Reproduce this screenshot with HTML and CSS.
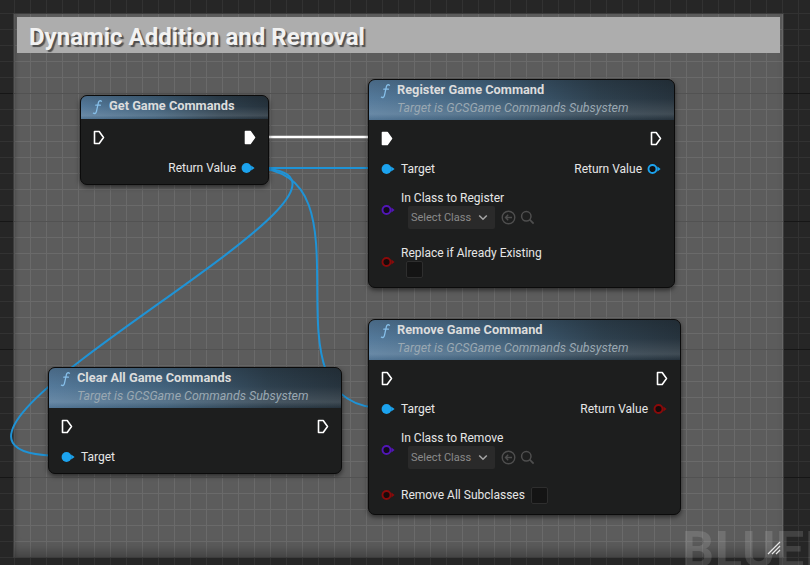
FILE: index.html
```html
<!DOCTYPE html>
<html>
<head>
<meta charset="utf-8">
<link rel="stylesheet" href="styles.css">
</head>
<body>
<div class="canvas">
  <div class="comment">
    <div class="comment-title">Dynamic Addition and Removal</div>
    <svg class="resize" width="14" height="14" viewBox="0 0 14 14"><path d="M13 1L1 13M13 5L5 13M13 9L9 13" stroke="#e6e6e6" stroke-width="1.3"/></svg>
  </div>

  <svg class="wires" width="810" height="565" viewBox="0 0 810 565">
    <path d="M256 137H382" stroke="#ffffff" stroke-width="2.6" fill="none"/>
    <path d="M252 168H384" stroke="#1f93d6" stroke-width="2" fill="none"/>
    <path d="M252 168C382 168 252 408 384 408" stroke="#1f93d6" stroke-width="2" fill="none"/>
    <path d="M252 168C452 168 -165 456 62 456" stroke="#1f93d6" stroke-width="2" fill="none"/>
  </svg>

  <!-- Get Game Commands -->
  <div class="node n-get">
    <div class="hdr single">
      <svg class="fn" width="11" height="16" viewBox="0 0 11 16"><path d="M9.5 2.2C8.2 1.3 6.8 1.8 6.4 3.6L4.4 12.6C4 14.4 2.8 14.9 1.4 14.2M3.8 6.2H8.4" stroke="#86bfe9" stroke-width="1.3" fill="none" stroke-linecap="round"/></svg>
      <span class="ttl">Get Game Commands</span>
    </div>
    <div class="nbody pb5">
      <div class="row split">
        <svg width="12" height="15" viewBox="0 0 12 15"><path d="M1.5 1.5H6.2L10.5 7.5L6.2 13.5H1.5Z" fill="none" stroke="#fff" stroke-width="1.6" stroke-linejoin="round"/></svg>
        <svg width="12" height="15" viewBox="0 0 12 15"><path d="M1.5 1.5H6.2L10.5 7.5L6.2 13.5H1.5Z" fill="#fff" stroke="#fff" stroke-width="1.6" stroke-linejoin="round"/></svg>
      </div>
      <div class="row end mt9">
        <span>Return Value</span>
        <svg width="15" height="12" viewBox="0 0 15 12"><circle cx="5.5" cy="6" r="4.9" fill="#1ca3ee"/><path d="M10.2 3.6L13.6 6L10.2 8.4Z" fill="#1ca3ee"/></svg>
      </div>
    </div>
  </div>

  <!-- Register Game Command -->
  <div class="node n-reg">
    <div class="hdr">
      <svg class="fn" width="11" height="16" viewBox="0 0 11 16"><path d="M9.5 2.2C8.2 1.3 6.8 1.8 6.4 3.6L4.4 12.6C4 14.4 2.8 14.9 1.4 14.2M3.8 6.2H8.4" stroke="#86bfe9" stroke-width="1.3" fill="none" stroke-linecap="round"/></svg>
      <span class="ttl">Register Game Command</span>
      <span class="sub">Target is GCSGame Commands Subsystem</span>
    </div>
    <div class="nbody pb9">
      <div class="row split">
        <svg width="12" height="15" viewBox="0 0 12 15"><path d="M1.5 1.5H6.2L10.5 7.5L6.2 13.5H1.5Z" fill="#fff" stroke="#fff" stroke-width="1.6" stroke-linejoin="round"/></svg>
        <svg width="12" height="15" viewBox="0 0 12 15"><path d="M1.5 1.5H6.2L10.5 7.5L6.2 13.5H1.5Z" fill="none" stroke="#fff" stroke-width="1.6" stroke-linejoin="round"/></svg>
      </div>
      <div class="row split mt9">
        <span class="pinlabel">
          <svg width="15" height="12" viewBox="0 0 15 12"><circle cx="5.5" cy="6" r="4.9" fill="#1ca3ee"/><path d="M10.2 3.6L13.6 6L10.2 8.4Z" fill="#1ca3ee"/></svg>
          <span>Target</span>
        </span>
        <span class="pinlabel">
          <span>Return Value</span>
          <svg width="15" height="12" viewBox="0 0 15 12"><circle cx="5.5" cy="6" r="4" fill="#0f1012" stroke="#1ca3ee" stroke-width="1.9"/><path d="M10.4 3.6L13.6 6L10.4 8.4Z" fill="#1ca3ee"/></svg>
        </span>
      </div>
      <div class="pinblock mt10">
        <svg width="15" height="12" viewBox="0 0 15 12"><circle cx="5.5" cy="6" r="4" fill="#120c1c" stroke="#5216b8" stroke-width="1.9"/><path d="M10.4 3.6L13.6 6L10.4 8.4Z" fill="#5216b8"/></svg>
        <div class="stack">
          <span class="lbl">In Class to Register</span>
          <div class="picker">
            <div class="select"><span>Select Class</span><svg width="10" height="7" viewBox="0 0 10 7"><path d="M1.2 1.5L5 5.2L8.8 1.5" stroke="#a3a3a3" stroke-width="1.6" fill="none"/></svg></div>
            <svg class="pick-ic" width="15" height="15" viewBox="0 0 15 15"><circle cx="7.5" cy="7.5" r="6.3" stroke="#4e4e4e" stroke-width="1.4" fill="none"/><path d="M11 7.5H4.5M7.2 4.8L4.5 7.5L7.2 10.2" stroke="#4e4e4e" stroke-width="1.4" fill="none"/></svg>
            <svg width="15" height="15" viewBox="0 0 15 15"><circle cx="6.3" cy="6.3" r="4.7" stroke="#4e4e4e" stroke-width="1.5" fill="none"/><path d="M9.7 9.7L13.6 13.6" stroke="#4e4e4e" stroke-width="1.7"/></svg>
          </div>
        </div>
      </div>
      <div class="pinblock mt16">
        <svg width="15" height="12" viewBox="0 0 15 12"><circle cx="5.5" cy="6" r="4" fill="#180a0a" stroke="#8a0a0a" stroke-width="1.9"/><path d="M10.4 3.6L13.6 6L10.4 8.4Z" fill="#8a0a0a"/></svg>
        <div class="stack">
          <span class="lbl">Replace if Already Existing</span>
          <span class="check ml5"></span>
        </div>
      </div>
    </div>
  </div>

  <!-- Remove Game Command -->
  <div class="node n-rem">
    <div class="hdr">
      <svg class="fn" width="11" height="16" viewBox="0 0 11 16"><path d="M9.5 2.2C8.2 1.3 6.8 1.8 6.4 3.6L4.4 12.6C4 14.4 2.8 14.9 1.4 14.2M3.8 6.2H8.4" stroke="#86bfe9" stroke-width="1.3" fill="none" stroke-linecap="round"/></svg>
      <span class="ttl">Remove Game Command</span>
      <span class="sub">Target is GCSGame Commands Subsystem</span>
    </div>
    <div class="nbody pb10">
      <div class="row split">
        <svg width="12" height="15" viewBox="0 0 12 15"><path d="M1.5 1.5H6.2L10.5 7.5L6.2 13.5H1.5Z" fill="none" stroke="#fff" stroke-width="1.6" stroke-linejoin="round"/></svg>
        <svg width="12" height="15" viewBox="0 0 12 15"><path d="M1.5 1.5H6.2L10.5 7.5L6.2 13.5H1.5Z" fill="none" stroke="#fff" stroke-width="1.6" stroke-linejoin="round"/></svg>
      </div>
      <div class="row split mt9">
        <span class="pinlabel">
          <svg width="15" height="12" viewBox="0 0 15 12"><circle cx="5.5" cy="6" r="4.9" fill="#1ca3ee"/><path d="M10.2 3.6L13.6 6L10.2 8.4Z" fill="#1ca3ee"/></svg>
          <span>Target</span>
        </span>
        <span class="pinlabel">
          <span>Return Value</span>
          <svg width="15" height="12" viewBox="0 0 15 12"><circle cx="5.5" cy="6" r="4" fill="#180a0a" stroke="#8a0a0a" stroke-width="1.9"/><path d="M10.4 3.6L13.6 6L10.4 8.4Z" fill="#8a0a0a"/></svg>
        </span>
      </div>
      <div class="pinblock mt10">
        <svg width="15" height="12" viewBox="0 0 15 12"><circle cx="5.5" cy="6" r="4" fill="#120c1c" stroke="#5216b8" stroke-width="1.9"/><path d="M10.4 3.6L13.6 6L10.4 8.4Z" fill="#5216b8"/></svg>
        <div class="stack">
          <span class="lbl">In Class to Remove</span>
          <div class="picker">
            <div class="select"><span>Select Class</span><svg width="10" height="7" viewBox="0 0 10 7"><path d="M1.2 1.5L5 5.2L8.8 1.5" stroke="#a3a3a3" stroke-width="1.6" fill="none"/></svg></div>
            <svg class="pick-ic" width="15" height="15" viewBox="0 0 15 15"><circle cx="7.5" cy="7.5" r="6.3" stroke="#4e4e4e" stroke-width="1.4" fill="none"/><path d="M11 7.5H4.5M7.2 4.8L4.5 7.5L7.2 10.2" stroke="#4e4e4e" stroke-width="1.4" fill="none"/></svg>
            <svg width="15" height="15" viewBox="0 0 15 15"><circle cx="6.3" cy="6.3" r="4.7" stroke="#4e4e4e" stroke-width="1.5" fill="none"/><path d="M9.7 9.7L13.6 13.6" stroke="#4e4e4e" stroke-width="1.7"/></svg>
          </div>
        </div>
      </div>
      <div class="row tight mt17">
        <span class="pinlabel">
          <svg width="15" height="12" viewBox="0 0 15 12"><circle cx="5.5" cy="6" r="4" fill="#180a0a" stroke="#8a0a0a" stroke-width="1.9"/><path d="M10.4 3.6L13.6 6L10.4 8.4Z" fill="#8a0a0a"/></svg>
          <span>Remove All Subclasses</span>
        </span>
        <span class="check"></span>
      </div>
    </div>
  </div>

  <!-- Clear All Game Commands -->
  <div class="node n-clr">
    <div class="hdr">
      <svg class="fn" width="11" height="16" viewBox="0 0 11 16"><path d="M9.5 2.2C8.2 1.3 6.8 1.8 6.4 3.6L4.4 12.6C4 14.4 2.8 14.9 1.4 14.2M3.8 6.2H8.4" stroke="#86bfe9" stroke-width="1.3" fill="none" stroke-linecap="round"/></svg>
      <span class="ttl">Clear All Game Commands</span>
      <span class="sub">Target is GCSGame Commands Subsystem</span>
    </div>
    <div class="nbody pb5">
      <div class="row split">
        <svg width="12" height="15" viewBox="0 0 12 15"><path d="M1.5 1.5H6.2L10.5 7.5L6.2 13.5H1.5Z" fill="none" stroke="#fff" stroke-width="1.6" stroke-linejoin="round"/></svg>
        <svg width="12" height="15" viewBox="0 0 12 15"><path d="M1.5 1.5H6.2L10.5 7.5L6.2 13.5H1.5Z" fill="none" stroke="#fff" stroke-width="1.6" stroke-linejoin="round"/></svg>
      </div>
      <div class="row mt9">
        <span class="pinlabel">
          <svg width="15" height="12" viewBox="0 0 15 12"><circle cx="5.5" cy="6" r="4.9" fill="#1ca3ee"/><path d="M10.2 3.6L13.6 6L10.2 8.4Z" fill="#1ca3ee"/></svg>
          <span>Target</span>
        </span>
      </div>
    </div>
  </div>

  <div class="watermark">BLUEPRINT</div>
</div>
</body>
</html>
```

FILE: styles.css
```css
* { box-sizing: border-box; }

body {
  margin: 0;
  background: #262626;
  font-family: Roboto, "Noto Sans", sans-serif;
}

.canvas {
  position: relative;
  width: 810px;
  height: 565px;
  overflow: hidden;
  background-color: #262626;
  background-image:
    linear-gradient(to bottom, #161616 1px, transparent 1px),
    linear-gradient(to bottom, #323232 1px, transparent 1px),
    linear-gradient(to right, #323232 1px, transparent 1px);
  background-size: 100% 128px, 16px 16px, 16px 16px;
  background-position: 0 93px, 0 13px, 14px 0;
}

/* comment box */
.comment {
  position: absolute;
  left: 14px;
  top: 14px;
  width: 769px;
  height: 543px;
  background-color: #5c5c5c;
  background-image:
    linear-gradient(to bottom, #525252 1px, transparent 1px),
    linear-gradient(to bottom, #6a6a6a 1px, transparent 1px),
    linear-gradient(to right, #6a6a6a 1px, transparent 1px);
  background-size: 100% 128px, 16px 16px, 16px 16px;
  background-position: 0 79px, 0 15px, 0 0;
  box-shadow: 0 0 0 1px #3c3c3c, inset 0 -12px 12px -6px rgba(0, 0, 0, 0.28), inset 3px 0 3px -1px rgba(0,0,0,0.15);
  padding: 3px 3px 0 3px;
}

.comment-title {
  height: 36px;
  background: #adadad;
  padding: 4px 0 0 12px;
  line-height: 32px;
  font-size: 24px;
  font-weight: 700;
  color: #f2f2f2;
  text-shadow: 2px 2px 1px rgba(0, 0, 0, 0.55);
  white-space: nowrap;
}

.resize {
  position: absolute;
  right: 2px;
  bottom: 2px;
}

.wires {
  position: absolute;
  left: 0;
  top: 0;
}

/* nodes */
.node {
  position: absolute;
  background: #1d1e1e;
  border: 1px solid #0b0b0b;
  border-radius: 7px;
  box-shadow: 0 2px 5px rgba(0, 0, 0, 0.55);
  overflow: hidden;
  color: #e6e6e6;
  font-size: 12px;
}

.n-get { left: 80px; top: 95px; width: 189px; }
.n-reg { left: 368px; top: 79px; width: 307px; }
.n-rem { left: 368px; top: 319px; width: 313px; }
.n-clr { left: 48px; top: 367px; width: 294px; }

.hdr {
  display: grid;
  grid-template-columns: 17px 1fr;
  padding: 2px 10px 4px 11px;
  background:
    linear-gradient(to bottom, rgba(0, 0, 0, 0.14) 0%, rgba(255, 255, 255, 0.0) 45%, rgba(255, 255, 255, 0.12) 85%, rgba(0, 0, 0, 0.04) 100%),
    linear-gradient(to right, #54799a 0%, #41617b 40%, #2e404e 75%, #26333d 100%);
}

.hdr.single { padding-bottom: 4px; }

.fn {
  align-self: center;
  margin-top: 1px;
}

.ttl {
  font-weight: 700;
  font-size: 12.8px;
  line-height: 16px;
  color: #dcdcdc;
  white-space: nowrap;
}

.sub {
  grid-column: 2;
  font-style: italic;
  font-size: 12.4px;
  line-height: 17px;
  color: #9aa8b2;
  white-space: nowrap;
}

.nbody {
  display: flex;
  flex-direction: column;
  padding: 7px 12px 6px 12px;
}

.pb5 { padding-bottom: 5px; }
.pb9 { padding-bottom: 9px; }
.pb10 { padding-bottom: 10px; }

.row {
  display: flex;
  align-items: center;
  height: 22px;
  gap: 5px;
}

.row.split { justify-content: space-between; }
.row.end { justify-content: flex-end; }
.row.tight { height: 18px; gap: 6px; }

.mt9 { margin-top: 9px; }
.mt10 { margin-top: 10px; }
.mt16 { margin-top: 16px; }
.mt17 { margin-top: 17px; }

.pinlabel {
  display: flex;
  align-items: center;
  gap: 5px;
  white-space: nowrap;
}

.pinblock {
  display: flex;
  align-items: center;
  gap: 5px;
}

.stack {
  display: flex;
  flex-direction: column;
  align-items: flex-start;
}

.lbl {
  line-height: 16px;
  white-space: nowrap;
}

.picker {
  display: flex;
  align-items: center;
  gap: 4px;
  margin-left: 7px;
}

.select {
  width: 87px;
  height: 23px;
  background: #2a2a2a;
  border-radius: 2px;
  display: flex;
  align-items: center;
  justify-content: space-between;
  padding: 0 7px 0 3px;
  font-size: 11px;
  color: #8b8b8b;
}

.pick-ic { margin-left: 2px; }

.check {
  display: block;
  width: 17px;
  height: 17px;
  background: #141414;
  border: 1px solid #2e2e2e;
  border-radius: 2px;
}

.ml5 { margin-left: 5px; }

.watermark {
  position: absolute;
  left: 682px;
  top: 526px;
  font-size: 50px;
  line-height: 48px;
  font-weight: 700;
  color: rgba(255, 255, 255, 0.13);
  white-space: nowrap;
  letter-spacing: 1px;
}
```
